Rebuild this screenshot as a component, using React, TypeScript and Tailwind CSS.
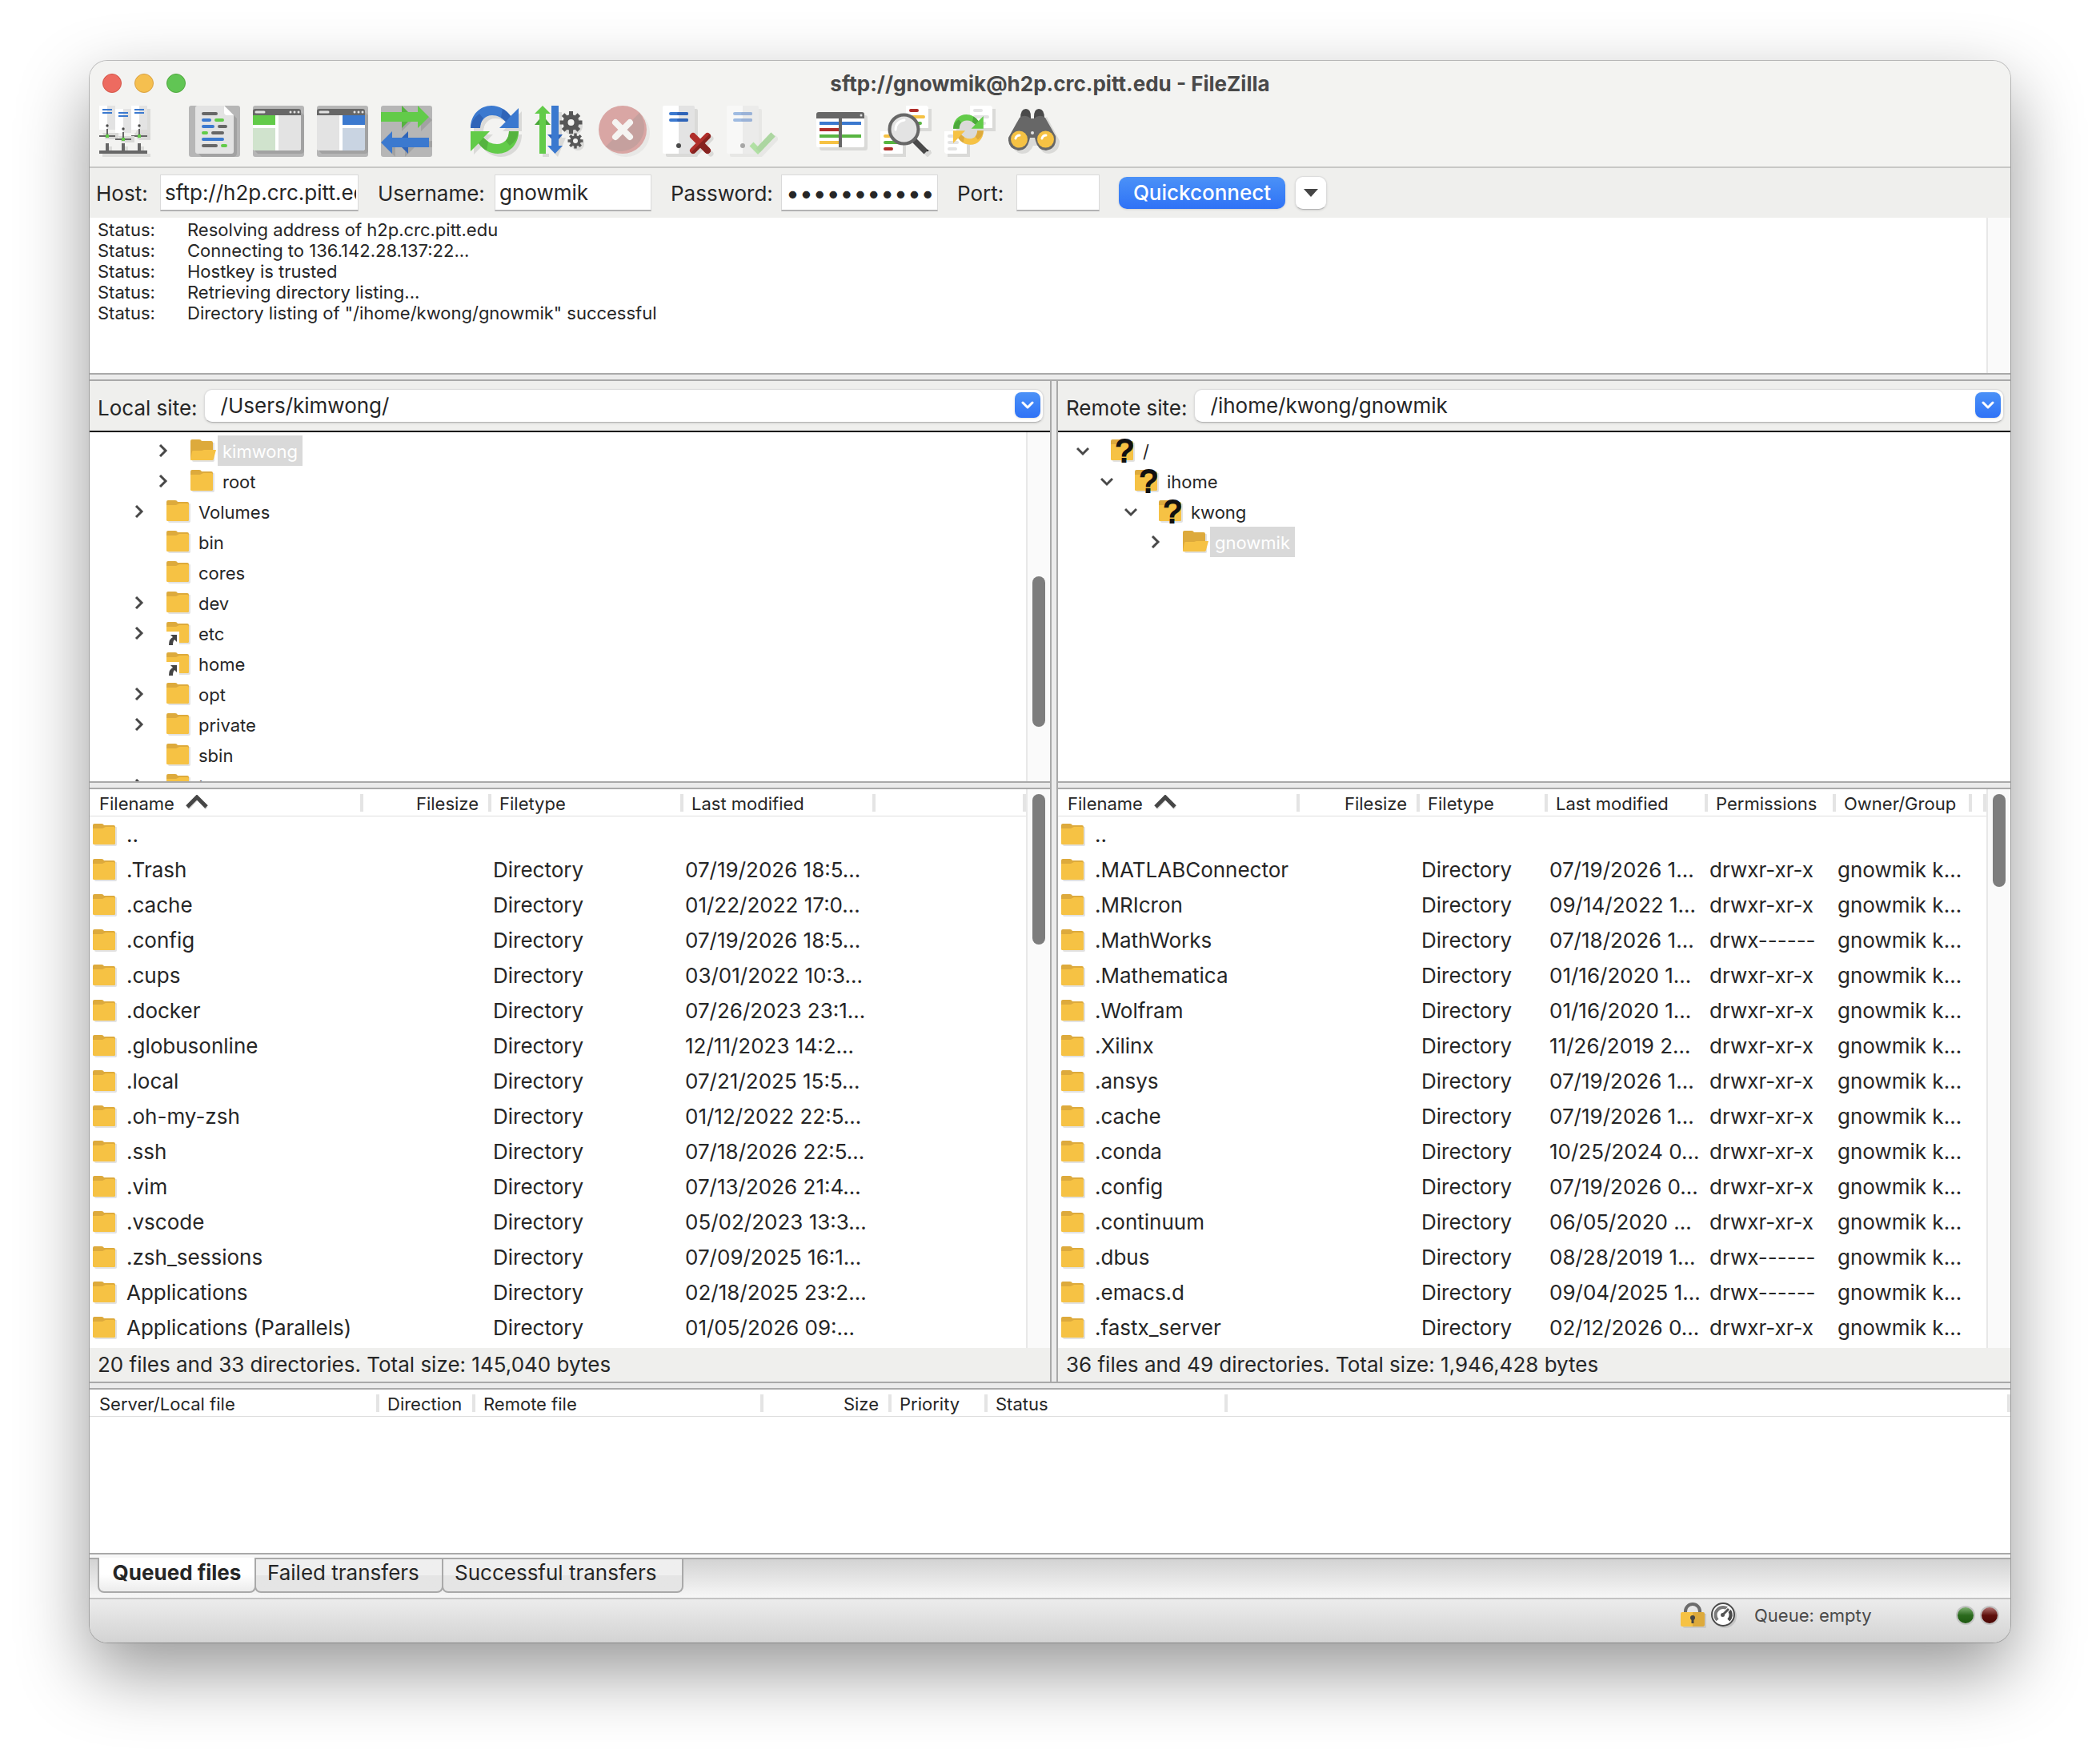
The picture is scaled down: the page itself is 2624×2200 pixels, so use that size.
import type { ReactNode } from 'react';

const GREEN = '#62cb49';
const BLUE = '#3b79cf';
const GRAY = '#676767';
const RED = '#b02e2a';
const YELLOW = '#f6c244';

function ServerShape({ x, y }: { x: number; y: number }) {
  return (
    <g transform={`translate(${x} ${y})`}>
      <path d="M4 34h20v8H8z" fill="#d9d9d7" />
      <path d="M0 0h10v30H0z" fill="#fff" />
      <path d="M10 0h10v30H10z" fill="#e3e3e3" />
      <path d="M4 4h12v2H4zM4 8h12v2H4z" fill={BLUE} />
      <circle cx="10" cy="25" r="1.7" fill="#4a4a4a" />
      <path d="M9 29h2v8H9zM0 37h20v2H0z" fill={GRAY} />
      <path d="M8 36h4v4H8z" fill={GREEN} />
    </g>
  );
}

function SitesIcon() {
  return (
    <svg viewBox="0 0 64 64" className="size-16">
      <path d="M60 4h4v39H50l-6-6zM4 60h60v4H4zM12 51h4v5h-4zM32 51h4v5h-4zM52 51h4v5h-4z" fill="#dcdcda" />
      <ServerShape x={0} y={0} />
      <ServerShape x={40} y={0} />
      <ServerShape x={20} y={4} />
      <path d="M0 56h8v-9h4v9h16v-9h4v9h16v-9h4v9h8v4H0z" fill={GRAY} />
    </svg>
  );
}

function LogIcon() {
  return (
    <svg viewBox="0 0 64 64" className="size-16">
      <rect width="64" height="64" rx="3" fill="#b6b6b6" />
      <path d="M12 60l4 4h39q5 0 5-5V16l-4-4z" fill="#a2a2a2" />
      <path d="M11 0h33l12 12v45q0 3-3 3H11q-3 0-3-3V3q0-3 3-3z" fill="#e3e3e3" />
      <path d="M44 0l12 12h-8q-4 0-4-4z" fill="#fff" />
      <g strokeWidth="4" strokeLinecap="round">
        <path d="M18 10h16M38 26h8M30 34h12M18 50h16" stroke={GRAY} />
        <path d="M18 18h8M18 26h12M18 42h24" stroke={BLUE} />
        <path d="M34 18h8M18 34h4M42 50h4" stroke={GREEN} />
      </g>
    </svg>
  );
}

function PaneIcon({ remote }: { remote?: boolean }) {
  return (
    <svg viewBox="0 0 64 64" className="size-16">
      <rect width="64" height="64" rx="3" fill="#b6b6b6" />
      <path d="M2 56l4 4h54q4 0 4-4V12l-4-4z" fill="#a2a2a2" />
      <path d="M0 12h60v41q0 3-3 3H3q-3 0-3-3z" fill="#fff" />
      <path d="M0 12V7q0-3 3-3h54q3 0 3 3v5z" fill={GRAY} />
      <path d="M4 8h10" stroke="#e3e3e3" strokeWidth="3" strokeLinecap="round" />
      <path d="M47 8h.01M52 8h.01M57 8h.01" stroke="#e3e3e3" strokeWidth="3" strokeLinecap="round" />
      {remote ? (
        <>
          <path d="M0 12h28v44H3q-3 0-3-3z" fill="#e3e3e3" />
          <path d="M32 12h28v12H32z" fill={BLUE} />
          <path d="M32 28h28v25q0 3-3 3H32z" fill="#c9d4e2" />
        </>
      ) : (
        <>
          <path d="M0 12h28v12H0z" fill={GREEN} />
          <path d="M0 28h28v28H3q-3 0-3-3z" fill="#d0e3cd" />
          <path d="M32 12h28v41q0 3-3 3H32z" fill="#e3e3e3" />
        </>
      )}
    </svg>
  );
}

function TransferIcon() {
  return (
    <svg viewBox="0 0 64 64" className="size-16">
      <rect width="64" height="64" rx="3" fill="#b6b6b6" />
      <path d="M0 20h26v12l12-12h12v12l14-14-4-4zM4 50l14 14V52h12v12l12-12h22v-8z" fill="#a2a2a2" />
      <path d="M26 0l14 14-14 14z" fill="#55b33f" />
      <path d="M0 8h46V0l14 14-14 14v-8H0z" fill={GREEN} />
      <path d="M34 32L20 46l14 14z" fill="#2f64b8" />
      <path d="M60 40H14v-8L0 46l14 14v-8h46z" fill={BLUE} />
    </svg>
  );
}

function CycleArrows({ top, topDark, bottom, bottomDark }: { top: string; topDark: string; bottom: string; bottomDark: string }) {
  const arc = 'M0 28C0 11 12 0 26 0c10 0 18 5 24 13L60 3v25H36l8-8c-5-5-10-8-17-8-9 0-15 7-15 16z';
  return (
    <>
      <path d={arc} fill={top} />
      <path d="M0 28Q1 17 11 10l5 6q-4 5-4 12zM40 4q6 3 10 9l-6 7q-3-3-6-5z" fill={topDark} />
      <g transform="rotate(180 30 30)">
        <path d={arc} fill={bottom} />
        <path d="M0 28Q1 17 11 10l5 6q-4 5-4 12zM40 4q6 3 10 9l-6 7q-3-3-6-5z" fill={bottomDark} />
      </g>
    </>
  );
}

function RefreshIcon() {
  return (
    <svg viewBox="0 0 64 64" className="size-16">
      <g transform="translate(4 4)">
        <CycleArrows top="#dadad8" topDark="#dadad8" bottom="#dadad8" bottomDark="#dadad8" />
      </g>
      <CycleArrows top={BLUE} topDark="#2f64b8" bottom={GREEN} bottomDark="#55b33f" />
    </svg>
  );
}

function Gear({ cx, cy, r, hole }: { cx: number; cy: number; r: number; hole: number }) {
  const teeth = [0, 45, 90, 135];
  return (
    <g transform={`translate(${cx} ${cy})`} fill="#575757" stroke="#575757">
      {teeth.map((a) => (
        <path key={a} d={`M0 ${-r}V${r}`} strokeWidth={r * 0.36} transform={`rotate(${a})`} />
      ))}
      <circle r={r * 0.72} stroke="none" />
      <circle r={hole} fill="#f3f3f1" stroke="none" />
    </g>
  );
}

function QueueIcon() {
  return (
    <svg viewBox="0 0 64 64" className="size-16">
      <path d="M10 60h8v4h-8zM30 8h4v32h5L29 64l-4-4z" fill="#dadad8" />
      <circle cx="48" cy="25" r="12" fill="#dadad8" />
      <circle cx="54" cy="48" r="8" fill="#dadad8" />
      <path d="M10 12l10 12H0z" fill="#4ba83a" />
      <path d="M10 0l10 10h-6v50H6V10H0z" fill={GREEN} />
      <path d="M16 36h19l-9 11z" fill="#2f64b8" />
      <path d="M21 0h9v50h5l-9.500 10L16 50h5z" fill={BLUE} />
      <Gear cx={45.500} cy={21} r={14} hole={4} />
      <Gear cx={51} cy={44} r={9.500} hole={3} />
    </svg>
  );
}

function CancelIcon() {
  return (
    <svg viewBox="0 0 64 64" className="size-16">
      <circle cx="34" cy="34" r="30" fill="#e8e8e6" />
      <circle cx="30" cy="30" r="30" fill="#d9a6a4" />
      <path d="M51 9A30 30 0 0 1 9 51z" fill="#c5a09e" />
      <path d="M21 21l18 18M39 21L21 39" stroke="#f5f4f2" strokeWidth="8" strokeLinecap="round" />
    </svg>
  );
}

function ServerIcon({ children, faded }: { children: ReactNode; faded?: boolean }) {
  return (
    <svg viewBox="0 0 64 64" className={faded ? 'size-16 opacity-45' : 'size-16'}>
      <rect x="4" y="4" width="40" height="60" rx="2" fill="#dadad8" />
      <path d="M2 0h18v60H2q-2 0-2-2V2q0-2 2-2z" fill="#fff" />
      <path d="M20 0h18q2 0 2 2v56q0 2-2 2H20z" fill="#e3e3e3" />
      <path d="M10 10h20M10 18h20" stroke={BLUE} strokeWidth="4" strokeLinecap="round" />
      <path d="M20 10h10M20 18h10" stroke="#2f64b8" strokeWidth="4" strokeLinecap="round" />
      <circle cx="20" cy="50" r="3" fill="#4a4a4a" />
      {children}
    </svg>
  );
}

function DisconnectIcon() {
  return (
    <ServerIcon>
      <path d="M41 41l19 19M60 41L41 60" stroke="#dadad8" strokeWidth="7" strokeLinecap="round" />
      <path d="M38 38l18 18M56 38L38 56" stroke={RED} strokeWidth="8" strokeLinecap="round" />
      <path d="M58.800 35.200L35.200 58.800q3 2.500 5.600 0L47 52.600l6.200 6.200q3 2.400 5.600 0 2.400-2.800 0-5.600L52.600 47l6.200-6.200q2.500-3 0-5.600z" fill="#862320" />
    </ServerIcon>
  );
}

function ReconnectIcon() {
  return (
    <ServerIcon faded>
      <path d="M35 54l7 7 21-22" fill="none" stroke="#dadad8" strokeWidth="7" />
      <path d="M31 48l8 8 19-20" fill="none" stroke="#62cb49" strokeWidth="7" />
      <path d="M39 56l19-20" stroke="#58b541" strokeWidth="7" />
    </ServerIcon>
  );
}

function FilterIcon() {
  return (
    <svg viewBox="0 0 64 64" className="size-16">
      <rect x="4" y="12" width="60" height="44" rx="3" fill="#dadad8" />
      <path d="M0 16h60v34q0 2-2 2H2q-2 0-2-2z" fill="#fff" />
      <path d="M0 16v-5q0-3 3-3h54q3 0 3 3v5z" fill={GRAY} />
      <circle cx="56" cy="12" r="1.500" fill="#e3e3e3" />
      <path d="M4 20h52v4H4z" fill={BLUE} />
      <path d="M4 28h26v4H4z" fill={RED} />
      <path d="M4 36h52v4H4z" fill="#58b541" />
      <path d="M4 44h26v4H4z" fill={YELLOW} />
      <path d="M28 16h4v36h-4z" fill={GRAY} />
    </svg>
  );
}

function TwoPages() {
  return (
    <>
      <path d="M36 4h28v28H36zM4 36h28v28H4z" fill="#dadad8" />
      <path d="M32 0h26l2 2v26H32zM0 32h28v28H2l-2-2z" fill="#fff" />
    </>
  );
}

function CompareIcon() {
  return (
    <svg viewBox="0 0 64 64" className="size-16">
      <TwoPages />
      <g strokeWidth="4" strokeLinecap="round">
        <path d="M38 6h8M6 54h8" stroke={RED} />
        <path d="M38 14h16M6 38h16" stroke={YELLOW} />
        <path d="M38 22h12M6 46h16" stroke="#58b541" />
      </g>
      <path d="M47 49l12 12 4-4" stroke="#dadad8" strokeWidth="5" />
      <path d="M42 43l15 15" stroke="#4a4a4a" strokeWidth="7" />
      <circle cx="29.500" cy="29.500" r="18" fill="#e3e3e3" stroke={GRAY} strokeWidth="4" />
      <path d="M19 30q0-10 11-12" fill="none" stroke="#fff" strokeWidth="3" strokeLinecap="round" />
    </svg>
  );
}

function SyncIcon() {
  return (
    <svg viewBox="0 0 64 64" className="size-16">
      <TwoPages />
      <path d="M38 6h8M38 14h16M38 22h12M6 54h8M6 38h16M6 46h10" stroke="#e3e3e3" strokeWidth="4" strokeLinecap="round" />
      <circle cx="32" cy="32" r="17" fill="#dadad8" />
      <g transform="translate(11 11) scale(.63)">
        <CycleArrows top={GREEN} topDark="#4ba83a" bottom={YELLOW} bottomDark="#ddaa3c" />
      </g>
    </svg>
  );
}

function BinocularsIcon() {
  return (
    <svg viewBox="0 0 64 64" className="size-16">
      <path d="M48 14l16 30q0 14-13 16-9 0-14-10h-6q-4 10-14 10-8-1-12-8z" fill="#dadad8" />
      <path d="M15 16q0-12 7-12 6 0 6 10v6H15zM45 16q0-12-7-12-6 0-6 10v6h13z" fill="#4a4a4a" />
      <path d="M14 15q7-5 14 1h4q7-6 14-1l13 23q2 16-12 18-10 0-13-12l-1-4h-6l-1 4Q23 56 13 56-1 54 0 40z" fill={GRAY} />
      <circle cx="13.500" cy="42" r="10.500" fill={YELLOW} />
      <circle cx="46.500" cy="42" r="10.500" fill={YELLOW} />
      <circle cx="30" cy="34" r="2" fill="#e3e3e3" />
      <path d="M9 41q1-4 5-4M42 41q1-4 5-4" fill="none" stroke="#fff" strokeWidth="3" strokeLinecap="round" />
    </svg>
  );
}

const toolbar = [
  [{ name: 'Site Manager', icon: <SitesIcon /> }],
  [
    { name: 'Toggle message log', icon: <LogIcon /> },
    { name: 'Toggle local tree', icon: <PaneIcon /> },
    { name: 'Toggle remote tree', icon: <PaneIcon remote /> },
    { name: 'Toggle transfer queue', icon: <TransferIcon /> },
  ],
  [
    { name: 'Refresh', icon: <RefreshIcon /> },
    { name: 'Process queue', icon: <QueueIcon /> },
    { name: 'Cancel', icon: <CancelIcon /> },
    { name: 'Disconnect', icon: <DisconnectIcon /> },
    { name: 'Reconnect', icon: <ReconnectIcon /> },
  ],
  [
    { name: 'Filter', icon: <FilterIcon /> },
    { name: 'Compare directories', icon: <CompareIcon /> },
    { name: 'Synchronized browsing', icon: <SyncIcon /> },
    { name: 'Search', icon: <BinocularsIcon /> },
  ],
];

type FolderKind = 'closed' | 'open' | 'link' | 'unknown';

function Folder({ kind = 'closed' }: { kind?: FolderKind }) {
  return (
    <svg viewBox="0 0 32 32" className="size-8 shrink-0 overflow-visible">
      <path d="M2 6h27q1 0 1 1v21q0 2-2 2H4q-2 0-2-2z" fill="#e2e2e2" />
      <path d="M0 4q0-2 2-2h9q2 0 3 2h12q2 0 2 2v20q0 2-2 2H2q-2 0-2-2z" fill="#ddaa3c" />
      {kind === 'open' ? (
        <path d="M4 16h10l3-1h15l-3 11q0 2-2 2H1q-1 0-1-1l2-10q0-1 2-1z" fill={YELLOW} />
      ) : (
        <path d="M0 8h12l4-2h10q2 0 2 2v18q0 2-2 2H2q-2 0-2-2z" fill={YELLOW} />
      )}
      {kind === 'link' && (
        <>
          <path d="M0 14h16v18H2V30H0z" fill="#fff" />
          <path d="M3 31q0-8 5-10l-3-3h8v9l-3-3q-2 2-2 7z" fill="#444" />
        </>
      )}
      {kind === 'unknown' && (
        <text x="17" y="30" fontSize="40" textAnchor="middle" fill="#111" stroke="#111" strokeWidth="2" className="font-['Liberation_Sans',sans-serif]">
          ?
        </text>
      )}
    </svg>
  );
}

interface TreeNode {
  name: string;
  level: number;
  toggle?: 'open' | 'closed';
  kind?: FolderKind;
  selected?: boolean;
}

const localTree: TreeNode[] = [
  { name: 'kimwong', level: 2, toggle: 'closed', kind: 'open', selected: true },
  { name: 'root', level: 2, toggle: 'closed' },
  { name: 'Volumes', level: 1, toggle: 'closed' },
  { name: 'bin', level: 1 },
  { name: 'cores', level: 1 },
  { name: 'dev', level: 1, toggle: 'closed' },
  { name: 'etc', level: 1, toggle: 'closed', kind: 'link' },
  { name: 'home', level: 1, kind: 'link' },
  { name: 'opt', level: 1, toggle: 'closed' },
  { name: 'private', level: 1, toggle: 'closed' },
  { name: 'sbin', level: 1 },
  { name: 'tmp', level: 1, toggle: 'closed' },
];

const remoteTree: TreeNode[] = [
  { name: '/', level: 0, toggle: 'open', kind: 'unknown' },
  { name: 'ihome', level: 1, toggle: 'open', kind: 'unknown' },
  { name: 'kwong', level: 2, toggle: 'open', kind: 'unknown' },
  { name: 'gnowmik', level: 3, toggle: 'closed', kind: 'open', selected: true },
];

const indents = ['w-[15px]', 'w-[45px]', 'w-[75px]', 'w-[105px]'];

function Tree({ nodes, scroll }: { nodes: TreeNode[]; scroll?: boolean }) {
  return (
    <div className="flex h-[436px] overflow-hidden bg-white">
      <ul className="min-w-0 flex-1 pt-1">
        {nodes.map((n) => (
          <li key={n.name} className="flex h-[38px] items-center text-[22px]">
            <span className={indents[n.level]} />
            {n.toggle ? (
              <button aria-label={`Toggle ${n.name}`} className="flex w-8 justify-center">
                <svg viewBox="0 0 16 16" className={n.toggle === 'open' ? 'size-4 rotate-90' : 'size-4'}>
                  <path d="M5 1l7 7-7 7" fill="none" stroke="#484848" strokeWidth="3" />
                </svg>
              </button>
            ) : (
              <span className="w-8" />
            )}
            <span className="ml-[19px] flex">
              <Folder kind={n.kind} />
            </span>
            <span className={n.selected ? 'ml-0.5 flex h-full items-center bg-[#d9d9d9] px-1.5 pt-0.5 text-white' : 'ml-2 pt-0.5'}>
              {n.name}
            </span>
          </li>
        ))}
      </ul>
      {scroll && <ScrollTrack thumb="mt-[180px] h-[188px]" />}
    </div>
  );
}

function ScrollTrack({ thumb }: { thumb?: string }) {
  return (
    <div className="w-[30px] shrink-0 border-l-2 border-[#e8e8e8] bg-[#fafafa] pl-1.5">
      {thumb && <div className={`w-4 rounded-full bg-[#7d7d7d] ${thumb}`} />}
    </div>
  );
}

interface Column {
  title: string;
  width: string;
  right?: boolean;
  sorted?: boolean;
}

const localColumns: Column[] = [
  { title: 'Filename', width: 'w-[342px]', sorted: true },
  { title: 'Filesize', width: 'w-[160px]', right: true },
  { title: 'Filetype', width: 'w-[240px]' },
  { title: 'Last modified', width: 'w-[240px]' },
  { title: '', width: '' },
];

const remoteColumns: Column[] = [
  { title: 'Filename', width: 'w-[302px]', sorted: true },
  { title: 'Filesize', width: 'w-[150px]', right: true },
  { title: 'Filetype', width: 'w-[160px]' },
  { title: 'Last modified', width: 'w-[200px]' },
  { title: 'Permissions', width: 'w-[160px]' },
  { title: 'Owner/Group', width: 'w-[170px]' },
  { title: '', width: '' },
];

const queueColumns: Column[] = [
  { title: 'Server/Local file', width: 'w-[362px]' },
  { title: 'Direction', width: 'w-[120px]' },
  { title: 'Remote file', width: 'w-[360px]' },
  { title: 'Size', width: 'w-[160px]', right: true },
  { title: 'Priority', width: 'w-[120px]' },
  { title: 'Status', width: 'w-[300px]' },
  { title: '', width: '' },
];

function HeaderRow({ columns }: { columns: Column[] }) {
  return (
    <thead>
      <tr>
        {columns.map((c, i) => (
          <th key={i} className={`h-[34px] border-b border-[#dedede] p-0 pt-1.5 align-top font-normal ${c.width}`}>
            <div className={`flex h-[22px] items-center gap-3.5 border-r-4 border-[#e4e4e4] pt-0.5 text-[22px] leading-[22px] whitespace-nowrap ${c.right ? 'justify-end pr-3' : i === 0 ? 'pl-3' : 'pl-2.5'}`}>
              {c.title}
              {c.sorted && (
                <svg viewBox="0 0 28 18" className="mb-1 h-[18px] w-7">
                  <path d="M3 17L15 4l11 13" fill="none" stroke="#dcdcdc" strokeWidth="4" />
                  <path d="M2 15L14 3l12 12" fill="none" stroke="#464646" strokeWidth="5" />
                </svg>
              )}
            </div>
          </th>
        ))}
      </tr>
    </thead>
  );
}

const localFiles = [
  ['.Trash', '07/19/2026 18:5…'],
  ['.cache', '01/22/2022 17:0…'],
  ['.config', '07/19/2026 18:5…'],
  ['.cups', '03/01/2022 10:3…'],
  ['.docker', '07/26/2023 23:1…'],
  ['.globusonline', '12/11/2023 14:2…'],
  ['.local', '07/21/2025 15:5…'],
  ['.oh-my-zsh', '01/12/2022 22:5…'],
  ['.ssh', '07/18/2026 22:5…'],
  ['.vim', '07/13/2026 21:4…'],
  ['.vscode', '05/02/2023 13:3…'],
  ['.zsh_sessions', '07/09/2025 16:1…'],
  ['Applications', '02/18/2025 23:2…'],
  ['Applications (Parallels)', '01/05/2026 09:…'],
];

const remoteFiles = [
  ['.MATLABConnector', '07/19/2026 1…', 'drwxr-xr-x'],
  ['.MRIcron', '09/14/2022 1…', 'drwxr-xr-x'],
  ['.MathWorks', '07/18/2026 1…', 'drwx------'],
  ['.Mathematica', '01/16/2020 1…', 'drwxr-xr-x'],
  ['.Wolfram', '01/16/2020 1…', 'drwxr-xr-x'],
  ['.Xilinx', '11/26/2019 2…', 'drwxr-xr-x'],
  ['.ansys', '07/19/2026 1…', 'drwxr-xr-x'],
  ['.cache', '07/19/2026 1…', 'drwxr-xr-x'],
  ['.conda', '10/25/2024 0…', 'drwxr-xr-x'],
  ['.config', '07/19/2026 0…', 'drwxr-xr-x'],
  ['.continuum', '06/05/2020 …', 'drwxr-xr-x'],
  ['.dbus', '08/28/2019 1…', 'drwx------'],
  ['.emacs.d', '09/04/2025 1…', 'drwx------'],
  ['.fastx_server', '02/12/2026 0…', 'drwxr-xr-x'],
];

const localRows = [['..'], ...localFiles.map(([name, date]) => [name, '', 'Directory', date])];
const remoteRows = [['..'], ...remoteFiles.map(([name, date, perm]) => [name, '', 'Directory', date, perm, 'gnowmik k…'])];

function FileList({ columns, rows, thumb }: { columns: Column[]; rows: string[][]; thumb: string }) {
  return (
    <div className="flex overflow-hidden bg-white">
      <div className="min-w-0 flex-1 pb-1">
        <table className="w-full table-fixed border-separate border-spacing-0 text-left">
          <HeaderRow columns={columns} />
          <tbody>
            {rows.map((row) => (
              <tr key={row[0]}>
                {columns.map((_, i) => (
                  <td key={i} className="h-11 p-0 pt-0.5 pl-0.5 text-[26px] leading-8 whitespace-nowrap">
                    {i === 0 ? (
                      <span className="flex items-center gap-2.5 pl-0.5">
                        <Folder />
                        {row[0]}
                      </span>
                    ) : (
                      row[i]
                    )}
                  </td>
                ))}
              </tr>
            ))}
          </tbody>
        </table>
      </div>
      <ScrollTrack thumb={thumb} />
    </div>
  );
}

function Splitter() {
  return <div className="h-2.5 border-y-2 border-[#a9a9a9] bg-[#ebebeb]" />;
}

interface SiteProps {
  id: string;
  label: string;
  path: string;
  tree: TreeNode[];
  treeScroll?: boolean;
  columns: Column[];
  rows: string[][];
  thumb: string;
  summary: string;
}

function SitePane({ id, label, path, tree, treeScroll, columns, rows, thumb, summary }: SiteProps) {
  return (
    <section className="min-w-0">
      <div className="flex h-16 items-center gap-2 border-b-2 border-black pr-2 pl-2.5">
        <label htmlFor={id} className="pt-1 text-[26px] whitespace-nowrap">
          {label}
        </label>
        <div className="relative flex-1">
          <select
            id={id}
            className="h-[42px] w-full appearance-none rounded-[10px] border border-[#dcdcdc] border-b-[#b5b5b5] bg-white pl-5 text-[26px] leading-8 shadow-sm"
          >
            <option>{path}</option>
          </select>
          <span className="pointer-events-none absolute top-1 right-1 flex size-8 items-center justify-center rounded-lg bg-linear-to-b from-[#4b91f7] to-[#2f72f6] shadow-sm">
            <svg viewBox="0 0 16 16" className="size-4">
              <path d="M2 5l6 6 6-6" fill="none" stroke="#fff" strokeWidth="3" strokeLinecap="round" strokeLinejoin="round" />
            </svg>
          </span>
        </div>
      </div>
      <Tree nodes={tree} scroll={treeScroll} />
      <Splitter />
      <FileList columns={columns} rows={rows} thumb={thumb} />
      <p className="h-[42px] pl-2.5 text-[26px] leading-[42px] whitespace-nowrap">{summary}</p>
    </section>
  );
}

const log = [
  'Resolving address of h2p.crc.pitt.edu',
  'Connecting to 136.142.28.137:22...',
  'Hostkey is trusted',
  'Retrieving directory listing...',
  'Directory listing of "/ihome/kwong/gnowmik" successful',
];

const field =
  'h-[46px] border border-[#dadada] border-b-2 border-b-[#b3b3b3] bg-white pr-0.5 pl-[5px] leading-8 outline-none';

const tab = 'rounded-b-lg border-2 border-t-0 border-[#a9a9a9] bg-linear-to-b whitespace-nowrap';

export default function App() {
  return (
    <div className="bg-white px-28 pt-[76px] pb-[148px] font-['Inter',sans-serif] text-[#262626]">
      <main className="overflow-hidden rounded-[22px] bg-[#efefed] shadow-[0_0_0_1px_rgba(0,0,0,0.22),0_36px_88px_rgba(0,0,0,0.41)]">
        <header className="border-b-2 border-[#c8c8c6] bg-[#f3f3f1] pb-3">
          <div className="grid h-14 grid-cols-3 items-center px-4">
            <div className="flex gap-4">
              <button aria-label="Close" className="size-6 rounded-full border border-[#d35548] bg-[#ed6b60]" />
              <button aria-label="Minimize" className="size-6 rounded-full border border-[#d9a140] bg-[#f5bf4f]" />
              <button aria-label="Zoom" className="size-6 rounded-full border border-[#50a73f] bg-[#61c554]" />
            </div>
            <h1 className="text-center text-[26px] font-bold whitespace-nowrap text-[#494949]">
              sftp://gnowmik@h2p.crc.pitt.edu - FileZilla
            </h1>
          </div>
          <div className="flex gap-12 pl-3">
            {toolbar.map((group, i) => (
              <div key={i} className="flex gap-4">
                {group.map((b) => (
                  <button key={b.name} aria-label={b.name}>
                    {b.icon}
                  </button>
                ))}
              </div>
            ))}
          </div>
        </header>

        <form className="flex h-[62px] items-center text-[26px] whitespace-nowrap">
          <label htmlFor="host" className="w-[88px] pl-2">Host:</label>
          <input id="host" defaultValue="sftp://h2p.crc.pitt.edu" className={`${field} w-[248px]`} />
          <label htmlFor="user" className="w-[170px] pl-6">Username:</label>
          <input id="user" defaultValue="gnowmik" className={`${field} w-[196px]`} />
          <label htmlFor="pass" className="w-[162px] pl-6">Password:</label>
          <input id="pass" type="password" defaultValue="correcthorsebattery" className={`${field} w-[196px] text-[30px]`} />
          <label htmlFor="port" className="w-[98px] pl-6">Port:</label>
          <input id="port" className={`${field} w-[104px]`} />
          <button type="button" className="ml-6 h-10 w-52 rounded-[10px] bg-linear-to-b from-[#4b91f7] to-[#2f72f6] pb-0.5 font-medium text-white shadow-sm">
            Quickconnect
          </button>
          <button type="button" aria-label="Recent servers" className="ml-3 flex h-[42px] w-10 items-center justify-center rounded-[10px] border border-[#dcdcdc] border-b-[#b5b5b5] bg-white shadow-sm">
            <svg viewBox="0 0 20 12" className="h-3 w-5">
              <path d="M1 1h18l-9 10z" fill="#454545" />
            </svg>
          </button>
        </form>

        <div className="flex h-[194px] bg-white">
          <dl className="grid flex-1 auto-rows-[26px] grid-cols-[112px_1fr] pt-0.5 pl-2.5 text-[22px] leading-[26px]">
            {log.map((line) => (
              <div key={line} className="contents">
                <dt>Status:</dt>
                <dd>{line}</dd>
              </div>
            ))}
          </dl>
          <ScrollTrack />
        </div>

        <Splitter />

        <div className="grid grid-cols-[1200fr_10px_1190fr]">
          <SitePane
            id="local"
            label="Local site:"
            path="/Users/kimwong/"
            tree={localTree}
            treeScroll
            columns={localColumns}
            rows={localRows}
            thumb="mt-1.5 h-[188px]"
            summary="20 files and 33 directories. Total size: 145,040 bytes"
          />
          <div className="border-x-2 border-[#a9a9a9] bg-[#ebebeb]" />
          <SitePane
            id="remote"
            label="Remote site:"
            path="/ihome/kwong/gnowmik"
            tree={remoteTree}
            columns={remoteColumns}
            rows={remoteRows}
            thumb="mt-1.5 h-[116px]"
            summary="36 files and 49 directories. Total size: 1,946,428 bytes"
          />
        </div>

        <Splitter />

        <div className="h-[204px] bg-white">
          <table className="w-full table-fixed border-separate border-spacing-0 text-left">
            <HeaderRow columns={queueColumns} />
          </table>
        </div>

        <div className="border-t-2 border-[#a9a9a9] bg-[#f7f7f7] pt-1">
          <div role="tablist" className="flex h-[50px] items-start border-t-2 border-[#a9a9a9] bg-linear-to-b from-[#d3d3d3] to-[#f7f7f7] pl-2.5 text-[26px] leading-8">
            <button role="tab" aria-selected="true" className={`${tab} -mt-0.5 h-11 w-[198px] from-white via-white to-[#ececec] pb-1 font-bold`}>
              Queued files
            </button>
            <button role="tab" className={`${tab} -ml-0.5 h-[42px] w-[236px] from-[#efefef] from-50% to-[#e5e5e5] to-50% pb-1.5 pl-3.5 text-left`}>
              Failed transfers
            </button>
            <button role="tab" className={`${tab} -ml-0.5 h-[42px] w-[302px] from-[#efefef] from-50% to-[#e5e5e5] to-50% pb-1.5 pl-3.5 text-left`}>
              Successful transfers
            </button>
          </div>
        </div>

        <footer className="flex h-14 items-start justify-end border-t-2 border-[#c3c3c3] bg-linear-to-b from-[#ececec] to-[#d3d3d3] pt-1 pr-3.5 text-[22px] text-[#4a4a4a]">
          <svg viewBox="0 0 32 32" className="size-8">
            <path d="M3 14h29v17q0 1-2 1H5q-2 0-2-2z" fill="#c9c9c9" />
            <path d="M6 13V11a9 9 0 0 1 18 0v2" fill="none" stroke="#6b6b6b" strokeWidth="4" />
            <path d="M0 14q0-2 2-2h13v18H2q-2 0-2-2z" fill={YELLOW} />
            <path d="M15 12h13q2 0 2 2v14q0 2-2 2H15z" fill="#ddaa3c" />
            <circle cx="15" cy="19" r="3" fill="#444" />
            <path d="M13.500 20h3v6h-3z" fill="#444" />
          </svg>
          <svg viewBox="0 0 32 32" className="ml-1.5 size-8">
            <circle cx="17" cy="17" r="15" fill="#c4c4c4" />
            <circle cx="15" cy="15" r="14" fill="#fff" stroke="#4a4a4a" strokeWidth="2" />
            <path d="M8 22a9.500 9.500 0 1 1 14 0" fill="none" stroke="#7a7a7a" strokeWidth="4" />
            <path d="M23 10a9.500 9.500 0 0 1-1 12" fill="none" stroke="#4a4a4a" strokeWidth="4" />
            <path d="M15 15l8-8" stroke="#fff" strokeWidth="5" />
            <path d="M14 16l8-8" stroke="#555" strokeWidth="3" />
            <circle cx="14.500" cy="15.500" r="2.500" fill="#555" />
          </svg>
          <span className="ml-[22px] w-[252px] leading-8">Queue: empty</span>
          <span className="mt-1 size-6 rounded-full border-2 border-[#c2c2c2] bg-linear-to-b from-[#7db070] via-[#2b6a1d] to-[#1f5a12]" />
          <span className="mt-1 ml-1.5 size-6 rounded-full border-2 border-[#c2c2c2] bg-linear-to-b from-[#b07070] via-[#5f0f0c] to-[#4c0806]" />
        </footer>
      </main>
    </div>
  );
}
